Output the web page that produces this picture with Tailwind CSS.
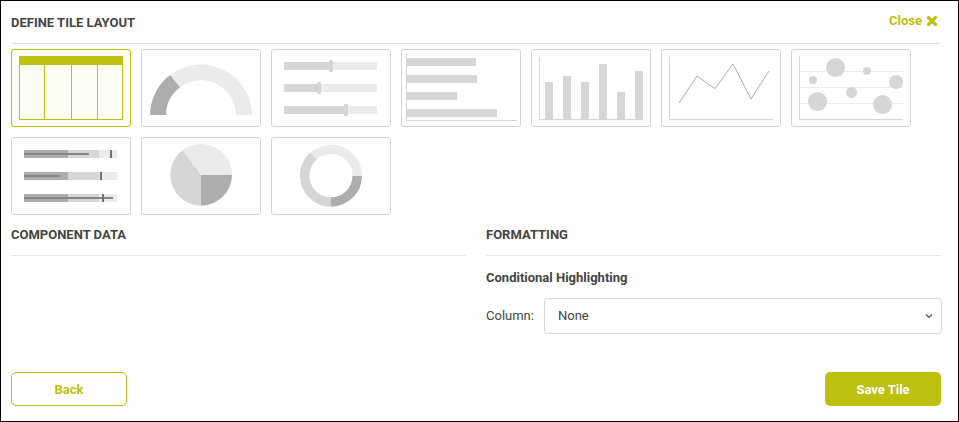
<!DOCTYPE html>
<html lang="en">
<head>
    <meta charset="UTF-8">
    <title>Define Tile Layout</title>
    <script src="https://cdn.jsdelivr.net/npm/@tailwindcss/browser@4"></script>
</head>
<body class="bg-white font-['Roboto',sans-serif] text-[#444]">
    <div class="w-[959px] h-[422px] border border-black pl-[10px] pr-[17px] flex flex-col">
        <!-- header -->
        <div class="h-[43px] shrink-0 border-b border-[#e4e4e4] flex items-start justify-between">
            <h1 class="mt-[14px] text-[13px] leading-[15px] font-bold uppercase">Define Tile Layout</h1>
            <button class="mt-[12px] mr-[4px] flex items-center gap-[5px] text-[13px] leading-[15px] font-bold text-[#bdc00e]">
                Close
                <svg class="shrink-0 w-[10px] h-[10px]" viewBox="0 0 10 10"><path d="M1.6 1.6 L8.4 8.4 M8.4 1.6 L1.6 8.4" stroke="#bdc00e" stroke-width="3.4" stroke-linecap="round" fill="none"/></svg>
            </button>
        </div>

        <!-- tile picker -->
        <div class="mt-[5px] grid grid-cols-[repeat(7,120px)] auto-rows-[78px] gap-[10px]">
            <div class="rounded-[3px] border border-[#bdc00e] bg-[#fbfcf3]">
                <svg class="-m-px block w-[120px] h-[78px]" viewBox="0 0 120 78">
                    <rect x="8" y="7" width="104" height="9" fill="#bdc00e"/>
                    <path d="M8.5 16 V70.5 H111.5 V16 M33.5 16 V70 M60.5 16 V70 M86.5 16 V70" fill="none" stroke="#bdc00e"/>
                </svg>
            </div>
            <div class="rounded-[3px] border border-[#d3d3d3]">
                <svg class="-m-px block w-[120px] h-[78px]" viewBox="0 0 120 78">
                    <path d="M29 26 A51 51 0 0 1 111 66 H95 A35 35 0 0 0 39 38.3 Z" fill="#ebebeb"/>
                    <path d="M9 66 A51 51 0 0 1 29 26 L39 38.3 A35 35 0 0 0 25 66 Z" fill="#adadad"/>
                </svg>
            </div>
            <div class="rounded-[3px] border border-[#d3d3d3]">
                <svg class="-m-px block w-[120px] h-[78px]" viewBox="0 0 120 78">
                    <rect x="13" y="13" width="93" height="8" fill="#ebebeb"/>
                    <rect x="13" y="13" width="47" height="8" fill="#d6d6d6"/>
                    <rect x="58" y="11" width="4" height="12" rx="1" fill="#d6d6d6"/>
                    <rect x="13" y="35" width="93" height="8" fill="#ebebeb"/>
                    <rect x="13" y="35" width="35" height="8" fill="#d6d6d6"/>
                    <rect x="46" y="33" width="4" height="12" rx="1" fill="#d6d6d6"/>
                    <rect x="13" y="57" width="93" height="8" fill="#ebebeb"/>
                    <rect x="13" y="57" width="62" height="8" fill="#d6d6d6"/>
                    <rect x="73" y="55" width="4" height="12" rx="1" fill="#d6d6d6"/>
                </svg>
            </div>
            <div class="rounded-[3px] border border-[#d3d3d3]">
                <svg class="-m-px block w-[120px] h-[78px]" viewBox="0 0 120 78">
                    <path d="M5.5 5 V71.5 H116" fill="none" stroke="#d6d6d6"/>
                    <rect x="6" y="9" width="69" height="8" fill="#d6d6d6"/>
                    <rect x="6" y="26" width="70" height="8" fill="#d6d6d6"/>
                    <rect x="6" y="43" width="50" height="8" fill="#d6d6d6"/>
                    <rect x="6" y="60" width="90" height="8" fill="#d6d6d6"/>
                </svg>
            </div>
            <div class="rounded-[3px] border border-[#d3d3d3]">
                <svg class="-m-px block w-[120px] h-[78px]" viewBox="0 0 120 78">
                    <path d="M8.5 8 V70.5 H112" fill="none" stroke="#d6d6d6"/>
                    <rect x="14" y="33" width="8" height="37" fill="#d6d6d6"/>
                    <rect x="32" y="27" width="8" height="43" fill="#d6d6d6"/>
                    <rect x="50" y="33" width="8" height="37" fill="#d6d6d6"/>
                    <rect x="68" y="15" width="8" height="55" fill="#d6d6d6"/>
                    <rect x="86" y="43" width="8" height="27" fill="#d6d6d6"/>
                    <rect x="104" y="22" width="8" height="48" fill="#d6d6d6"/>
                </svg>
            </div>
            <div class="rounded-[3px] border border-[#d3d3d3]">
                <svg class="-m-px block w-[120px] h-[78px]" viewBox="0 0 120 78">
                    <path d="M8.5 8 V70.5 H112" fill="none" stroke="#d6d6d6"/>
                    <path d="M18 54 L36 27 L54 39.7 L72 15 L90 50 L108 22" fill="none" stroke="#adadad"/>
                </svg>
            </div>
            <div class="rounded-[3px] border border-[#d3d3d3]">
                <svg class="-m-px block w-[120px] h-[78px]" viewBox="0 0 120 78">
                    <path d="M8.5 22.5 H112 M8.5 38.5 H112 M8.5 54.5 H112" fill="none" stroke="#ebebeb"/>
                    <path d="M8.5 8 V70.5 H112" fill="none" stroke="#d6d6d6"/>
                    <circle cx="44.5" cy="18.5" r="9.5" fill="#d6d6d6"/>
                    <circle cx="76" cy="22" r="4" fill="#d6d6d6"/>
                    <circle cx="22" cy="31" r="4" fill="#d6d6d6"/>
                    <circle cx="105" cy="33" r="7" fill="#d6d6d6"/>
                    <circle cx="60.5" cy="43.5" r="5.5" fill="#d6d6d6"/>
                    <circle cx="26.5" cy="52.5" r="9.5" fill="#d6d6d6"/>
                    <circle cx="91.5" cy="55.5" r="9.5" fill="#d6d6d6"/>
                </svg>
            </div>
            <div class="rounded-[3px] border border-[#d3d3d3]">
                <svg class="-m-px block w-[120px] h-[78px]" viewBox="0 0 120 78">
                    <rect x="13" y="13" width="93" height="8" fill="#ebebeb"/>
                    <rect x="13" y="13" width="75" height="8" fill="#d6d6d6"/>
                    <rect x="13" y="13" width="44" height="8" fill="#adadad"/>
                    <rect x="13" y="16" width="65" height="2" fill="#858585"/>
                    <rect x="99" y="13" width="2" height="8" fill="#707070"/>
                    <rect x="13" y="35" width="93" height="8" fill="#ebebeb"/>
                    <rect x="13" y="35" width="75" height="8" fill="#d6d6d6"/>
                    <rect x="13" y="35" width="44" height="8" fill="#adadad"/>
                    <rect x="13" y="38" width="36" height="2" fill="#858585"/>
                    <rect x="89" y="35" width="2" height="8" fill="#707070"/>
                    <rect x="13" y="57" width="93" height="8" fill="#ebebeb"/>
                    <rect x="13" y="57" width="75" height="8" fill="#d6d6d6"/>
                    <rect x="13" y="57" width="44" height="8" fill="#adadad"/>
                    <rect x="13" y="60" width="89" height="2" fill="#858585"/>
                    <rect x="91" y="57" width="2" height="8" fill="#707070"/>
                </svg>
            </div>
            <div class="rounded-[3px] border border-[#d3d3d3]">
                <svg class="-m-px block w-[120px] h-[78px]" viewBox="0 0 120 78">
                    <path d="M60 37.7 L91 37.7 A31 31 0 0 1 60 68.7 Z" fill="#adadad"/>
                    <path d="M60 37.7 L60 68.7 A31 31 0 0 1 41.7 13 Z" fill="#d6d6d6"/>
                    <path d="M60 37.7 L41.7 13 A31 31 0 0 1 91 37.7 Z" fill="#ebebeb"/>
                </svg>
            </div>
            <div class="rounded-[3px] border border-[#d3d3d3]">
                <svg class="-m-px block w-[120px] h-[78px]" viewBox="0 0 120 78">
                    <g fill="none" stroke-width="9.5">
                        <path d="M86.25 38.7 A26.25 26.25 0 0 1 60 64.95" stroke="#adadad"/>
                        <path d="M60 64.95 A26.25 26.25 0 0 1 42.8 18.8" stroke="#d6d6d6"/>
                        <path d="M42.8 18.8 A26.25 26.25 0 0 1 86.25 38.7" stroke="#ebebeb"/>
                    </g>
                </svg>
            </div>
        </div>

        <!-- lower columns -->
        <div class="mt-[9px] grid grid-cols-[455px_455px] gap-x-[20px]">
            <section>
                <h2 class="h-[32px] pt-[3px] border-b border-[#e4e4e4] text-[13px] leading-[15px] font-bold uppercase">Component Data</h2>
            </section>
            <section>
                <h2 class="h-[32px] pt-[3px] border-b border-[#e4e4e4] text-[13px] leading-[15px] font-bold uppercase">Formatting</h2>
                <h3 class="mt-[14px] text-[13px] leading-[15px] font-bold">Conditional Highlighting</h3>
                <div class="mt-[13px] flex items-center gap-[10px]">
                    <label class="-mt-[2px] text-[13px] leading-[15px]">Column:</label>
                    <div class="relative shrink-0 w-[398px]">
                        <select class="block w-full h-[36px] pl-[13px] appearance-none rounded-[4px] border border-[#d9d9d9] bg-white text-[13px] text-[#444]">
                            <option>None</option>
                        </select>
                        <svg class="absolute right-[9px] top-[15px] w-[8px] h-[6px]" viewBox="0 0 8 6"><path d="M1 1.5 L4 4.5 L7 1.5" fill="none" stroke="#555" stroke-width="1.2"/></svg>
                    </div>
                </div>
            </section>
        </div>

        <!-- footer -->
        <div class="mt-auto mb-[15px] flex justify-between">
            <button class="w-[116px] h-[34px] pt-[1px] rounded-[5px] border border-[#bdc00e] bg-white text-[13px] font-bold text-[#bdc00e]">Back</button>
            <button class="w-[116px] h-[34px] pt-[1px] rounded-[5px] bg-[#bdc00e] text-[13px] font-bold text-white">Save Tile</button>
        </div>
    </div>
</body>
</html>
